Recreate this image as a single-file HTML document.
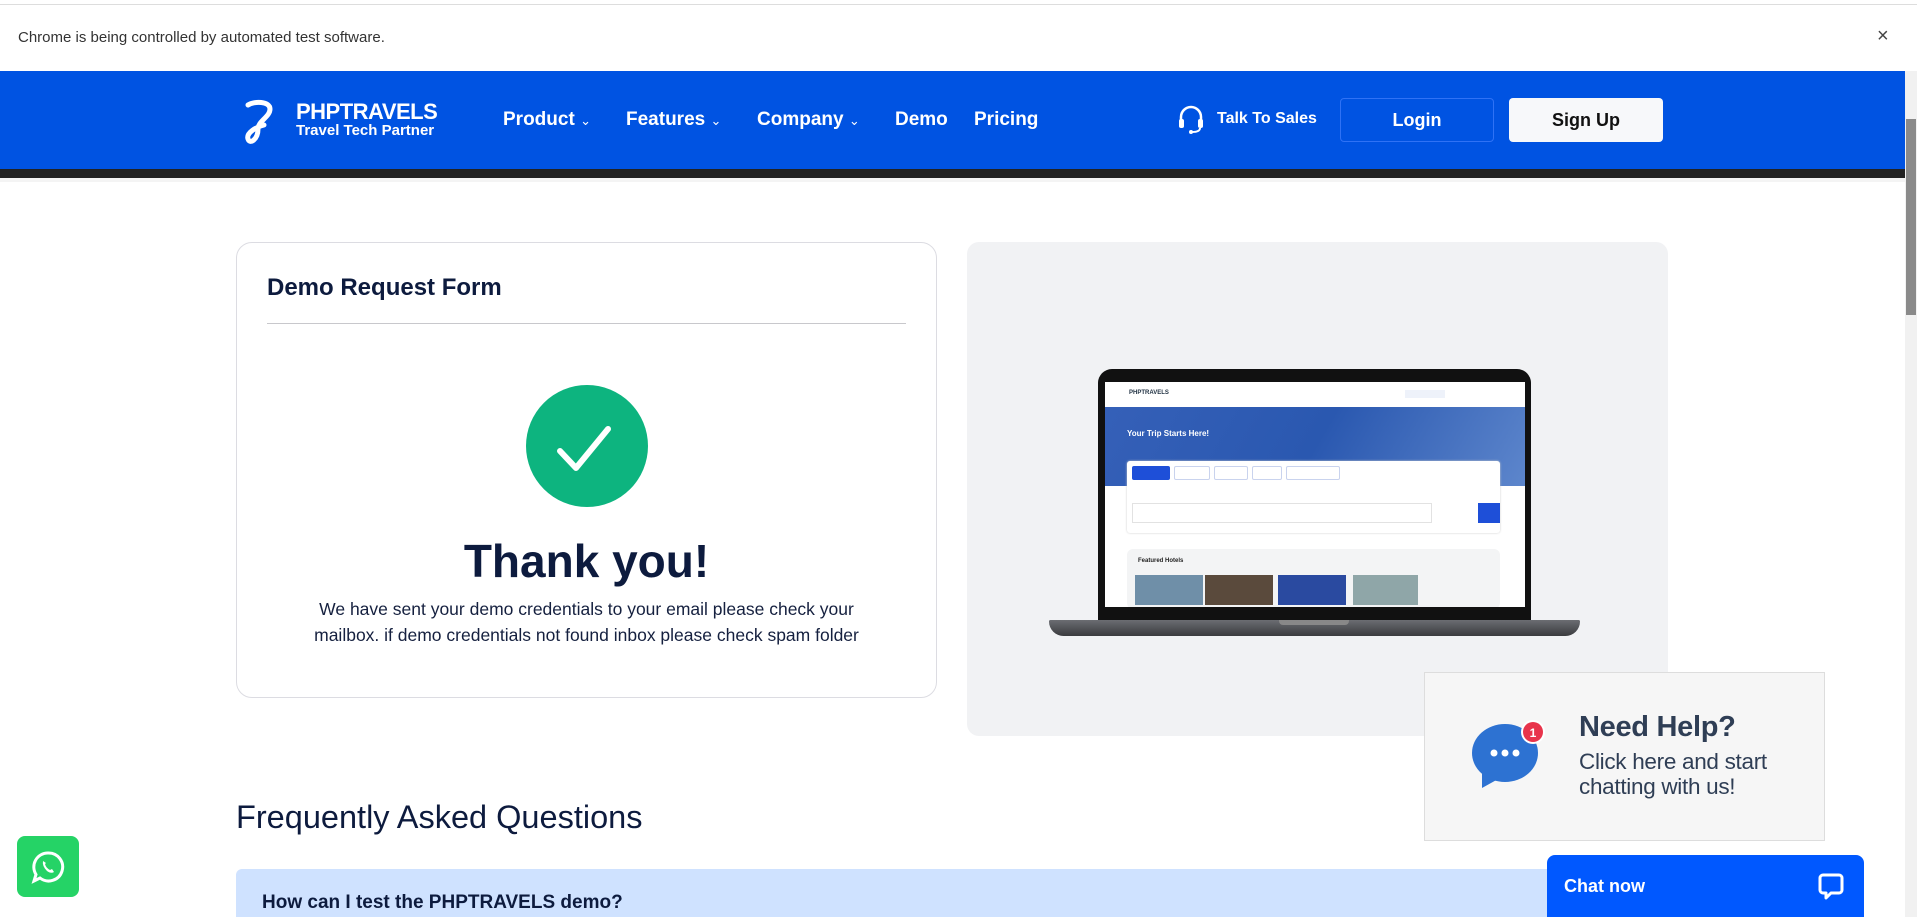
<!DOCTYPE html>
<html><head><meta charset="utf-8"><style>
*{box-sizing:border-box;margin:0;padding:0}
body{width:1917px;height:917px;overflow:hidden;background:#fff;font-family:"Liberation Sans",Arial,sans-serif;position:relative}
.abs{position:absolute}
</style></head><body>
<div class="abs" style="left:0;top:4px;width:1917px;height:67px;background:#fff;border-top:1px solid #ddd"></div>
<div class="abs" style="left:18px;top:29px;font-size:15px;color:#333">Chrome is being controlled by automated test software.</div>
<div class="abs" style="left:1877px;top:25px;font-size:20px;color:#444;font-weight:normal">×</div>
<div class="abs" style="left:0;top:71px;width:1905px;height:98px;background:#0053e2"></div>
<div class="abs" style="left:0;top:169px;width:1905px;height:9px;background:#222"></div>
<div class="abs" style="left:0;top:178px;width:1905px;height:4px;background:#f4f4f4"></div>
<svg class="abs" style="left:244px;top:99px" width="32" height="46" viewBox="0 0 32 46"><path d="M4 6 C10 2 26 2 26 10 C26 18 14 22 14 30 C14 40 6 46 4 40 C2 34 12 28 20 26" stroke="#fff" stroke-width="5" fill="none" stroke-linecap="round"/></svg>
<div class="abs" style="left:296px;top:99px;color:#fff;font-weight:bold;font-size:22px;letter-spacing:-0.5px">PHPTRAVELS</div>
<div class="abs" style="left:296px;top:122px;color:#fff;font-weight:bold;font-size:15px">Travel Tech Partner</div>
<div class="abs" style="left:503px;top:109px;color:#fff;font-weight:bold;font-size:19px;white-space:nowrap">Product <span style="font-weight:normal;font-size:13px">&#8964;</span></div>
<div class="abs" style="left:626px;top:109px;color:#fff;font-weight:bold;font-size:19px;white-space:nowrap">Features <span style="font-weight:normal;font-size:13px">&#8964;</span></div>
<div class="abs" style="left:757px;top:109px;color:#fff;font-weight:bold;font-size:19px;white-space:nowrap">Company <span style="font-weight:normal;font-size:13px">&#8964;</span></div>
<div class="abs" style="left:895px;top:109px;color:#fff;font-weight:bold;font-size:19px">Demo</div>
<div class="abs" style="left:974px;top:109px;color:#fff;font-weight:bold;font-size:19px">Pricing</div>
<svg class="abs" style="left:1178px;top:104px" width="26" height="30" viewBox="0 0 26 30"><path d="M3 17 V13 A10 10 0 0 1 23 13 V17" stroke="#fff" stroke-width="2.5" fill="none"/><rect x="1" y="15" width="5" height="9" rx="2" fill="#fff"/><rect x="20" y="15" width="5" height="9" rx="2" fill="#fff"/><path d="M22 24 Q22 28 14 28" stroke="#fff" stroke-width="2" fill="none"/><circle cx="13" cy="28" r="2" fill="#fff"/></svg>
<div class="abs" style="left:1217px;top:110px;color:#fff;font-weight:bold;font-size:16px">Talk To Sales</div>
<div class="abs" style="left:1340px;top:98px;width:154px;height:44px;border:1px solid #2f72f5;border-radius:4px;color:#fff;font-weight:bold;font-size:18px;text-align:center;line-height:42px">Login</div>
<div class="abs" style="left:1509px;top:98px;width:154px;height:44px;background:#f7f8fa;border-radius:4px;color:#111;font-weight:bold;font-size:18px;text-align:center;line-height:44px">Sign Up</div>
<div class="abs" style="left:1905px;top:71px;width:12px;height:846px;background:#f1f1f1"></div>
<div class="abs" style="left:1906px;top:119px;width:10px;height:196px;background:#8a8a8a"></div>
<div class="abs" style="left:236px;top:242px;width:701px;height:456px;border:1px solid #dcdce2;border-radius:16px;background:#fff"></div>
<div class="abs" style="left:267px;top:274px;font-size:24px;font-weight:bold;color:#0d1b3e">Demo Request Form</div>
<div class="abs" style="left:267px;top:323px;width:639px;height:1px;background:#c8c8cc"></div>
<div class="abs" style="left:526px;top:385px;width:122px;height:122px;border-radius:50%;background:#0db47f"></div>
<svg class="abs" style="left:526px;top:385px" width="122" height="122" viewBox="0 0 122 122"><path d="M34 66 L50 83 L82 44" stroke="#fff" stroke-width="6" fill="none" stroke-linecap="round" stroke-linejoin="round"/></svg>
<div class="abs" style="left:236px;top:534px;width:701px;text-align:center;font-size:46px;font-weight:bold;color:#0d1b3e">Thank you!</div>
<div class="abs" style="left:236px;top:596px;width:701px;text-align:center;font-size:17.5px;line-height:26px;color:#15203f">We have sent your demo credentials to your email please check your<br>mailbox. if demo credentials not found inbox please check spam folder</div>
<div class="abs" style="left:967px;top:242px;width:701px;height:494px;background:#f1f2f4;border-radius:12px"></div>
<div class="abs" style="left:1098px;top:369px;width:433px;height:253px;background:#111;border-radius:14px 14px 0 0"></div>
<div class="abs" style="left:1105px;top:382px;width:420px;height:225px;background:#fff;overflow:hidden">
 <div class="abs" style="left:0;top:25px;width:420px;height:79px;background:linear-gradient(120deg,#3560b8,#2a58b0 50%,#5d86cc)"></div>
 <div class="abs" style="left:24px;top:8px;font-size:6px;color:#234;font-weight:bold">PHPTRAVELS</div>
 <div class="abs" style="left:300px;top:8px;width:40px;height:8px;background:#eef2fa"></div>
 <div class="abs" style="left:22px;top:47px;font-size:8px;color:#fff;font-weight:bold">Your Trip Starts Here!</div>
 <div class="abs" style="left:22px;top:79px;width:373px;height:72px;background:#fff;border-radius:3px;box-shadow:0 0 2px #ccc"></div>
 <div class="abs" style="left:27px;top:84px;width:38px;height:14px;background:#1e4fd8;border-radius:2px"></div>
 <div class="abs" style="left:69px;top:84px;width:36px;height:14px;border:1px solid #c9d3ee;border-radius:2px"></div>
 <div class="abs" style="left:109px;top:84px;width:34px;height:14px;border:1px solid #c9d3ee;border-radius:2px"></div>
 <div class="abs" style="left:147px;top:84px;width:30px;height:14px;border:1px solid #c9d3ee;border-radius:2px"></div>
 <div class="abs" style="left:181px;top:84px;width:54px;height:14px;border:1px solid #c9d3ee;border-radius:2px"></div>
 <div class="abs" style="left:27px;top:121px;width:300px;height:20px;border:1px solid #e2e2e2"></div>
 <div class="abs" style="left:373px;top:121px;width:22px;height:20px;background:#1e4fd8"></div>
 <div class="abs" style="left:22px;top:167px;width:373px;height:60px;background:#f3f4f5;border-radius:6px"></div>
 <div class="abs" style="left:33px;top:176px;font-size:6px;font-weight:bold;color:#222">Featured Hotels</div>
 <div class="abs" style="left:30px;top:193px;width:68px;height:30px;background:#6f8fa8"></div>
 <div class="abs" style="left:100px;top:193px;width:68px;height:30px;background:#5a4a3c"></div>
 <div class="abs" style="left:173px;top:193px;width:68px;height:30px;background:#2a4aa0"></div>
 <div class="abs" style="left:248px;top:193px;width:65px;height:30px;background:#8fa6a8"></div>
</div>
<div class="abs" style="left:1049px;top:620px;width:531px;height:16px;background:linear-gradient(#6b6d72,#3a3b3e);border-radius:2px 2px 20px 20px"></div>
<div class="abs" style="left:1279px;top:620px;width:70px;height:5px;background:#888;border-radius:0 0 4px 4px"></div>
<div class="abs" style="left:236px;top:799px;font-size:32.5px;color:#0d1b3e">Frequently Asked Questions</div>
<div class="abs" style="left:236px;top:869px;width:1432px;height:48px;background:#cfe2ff;border-radius:6px 6px 0 0"></div>
<div class="abs" style="left:262px;top:892px;font-size:19px;font-weight:bold;color:#0d1b3e">How can I test the PHPTRAVELS demo?</div>
<div class="abs" style="left:1424px;top:672px;width:401px;height:169px;background:#f6f6f6;border:1px solid #ddd"></div>
<svg class="abs" style="left:1470px;top:718px" width="80" height="75" viewBox="0 0 80 75"><ellipse cx="35" cy="35" rx="33" ry="29" fill="#2d72d2"/><path d="M12 52 L12 70 L30 60Z" fill="#2d72d2"/><circle cx="24" cy="35" r="3.5" fill="#fff"/><circle cx="35" cy="35" r="3.5" fill="#fff"/><circle cx="46" cy="35" r="3.5" fill="#fff"/><circle cx="63" cy="14" r="12" fill="#fff"/><circle cx="63" cy="14" r="10" fill="#e8344b"/><text x="63" y="19" font-size="12" font-weight="bold" fill="#fff" text-anchor="middle" font-family="Liberation Sans">1</text></svg>
<div class="abs" style="left:1579px;top:711px;font-size:29px;font-weight:bold;color:#2f3e55;letter-spacing:-0.3px">Need Help?</div>
<div class="abs" style="left:1579px;top:749px;font-size:22.5px;line-height:25px;color:#2f3e55;letter-spacing:-0.3px">Click here and start<br>chatting with us!</div>
<div class="abs" style="left:1547px;top:855px;width:317px;height:62px;background:#0058ff;border-radius:8px 8px 0 0"></div>
<div class="abs" style="left:1564px;top:876px;font-size:18px;font-weight:bold;color:#fff">Chat now</div>
<svg class="abs" style="left:1817px;top:872px" width="28" height="28" viewBox="0 0 28 28"><path d="M6 3 H22 A3 3 0 0 1 25 6 V18 A3 3 0 0 1 22 21 H14 L9 26 V21 H6 A3 3 0 0 1 3 18 V6 A3 3 0 0 1 6 3Z" stroke="#fff" stroke-width="3" fill="none" stroke-linejoin="round"/></svg>
<div class="abs" style="left:17px;top:836px;width:62px;height:61px;background:#25d366;border-radius:8px"></div>
<svg class="abs" style="left:31px;top:850px" width="34" height="34" viewBox="0 0 34 34"><path d="M17 3 A14 14 0 1 1 9 28 L3 31 L5 24.5 A14 14 0 0 1 17 3Z" stroke="#fff" stroke-width="3" fill="none"/><path d="M12 11 Q11 16 16 21 Q20 24 23 22 L21 19 L19 20 Q15 18 14 14 L15 13 Z" fill="#fff"/></svg>
</body></html>
